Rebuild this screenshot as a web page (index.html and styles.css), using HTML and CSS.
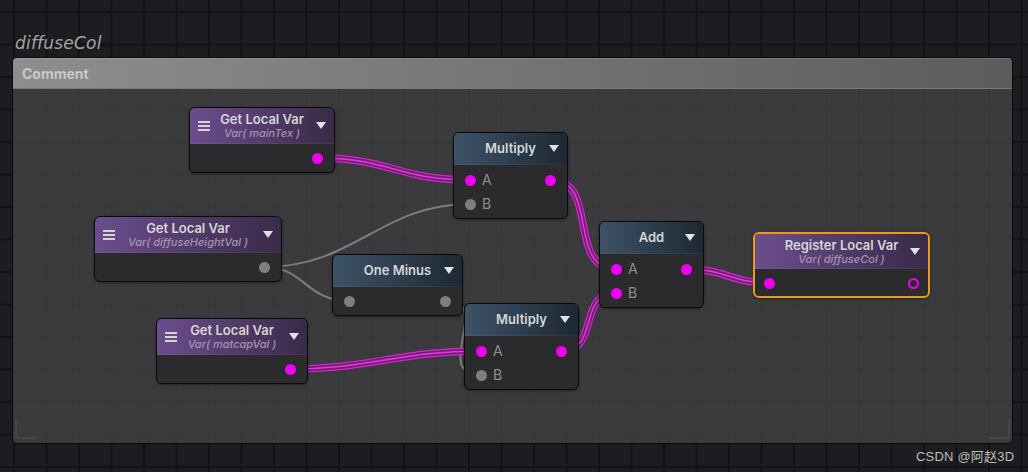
FILE: index.html
```html
<!DOCTYPE html>
<html>
<head>
<meta charset="utf-8">
<link rel="stylesheet" href="styles.css">
</head>
<body>
<div class="canvas">
  <div class="graph-title">diffuseCol</div>
  <div class="comment">
    <div class="comment-head">Comment</div>
    <div class="comment-body"></div>
    <span class="grip grip-left"></span>
    <span class="grip grip-right"></span>
  </div>

  <svg class="wires" width="1028" height="472" viewBox="0 0 1028 472">
    <g class="gray">
      <path d="M264.5 267 C355 267, 380 204, 470.5 204"/>
      <path d="M264.5 267 C305 267, 305 301, 349.5 301"/>
      <path d="M445.5 301 C495 301, 430 375, 481.5 375"/>
    </g>
    <g class="mag-outer">
      <path d="M317.5 158 C392 158, 396 180, 470.5 180"/>
      <path d="M290.5 369 C370 369, 400 351, 481.5 351"/>
      <path d="M550.5 180 C600 180, 566 269, 616.5 269"/>
      <path d="M561.5 351 C600 351, 577 293, 616.5 293"/>
      <path d="M686.5 269 C726 269, 731 283, 769.5 283"/>
    </g>
    <g class="mag-gap">
      <path d="M317.5 158 C392 158, 396 180, 470.5 180"/>
      <path d="M290.5 369 C370 369, 400 351, 481.5 351"/>
      <path d="M550.5 180 C600 180, 566 269, 616.5 269"/>
      <path d="M561.5 351 C600 351, 577 293, 616.5 293"/>
      <path d="M686.5 269 C726 269, 731 283, 769.5 283"/>
    </g>
    <g class="mag-core">
      <path d="M317.5 158 C392 158, 396 180, 470.5 180"/>
      <path d="M290.5 369 C370 369, 400 351, 481.5 351"/>
      <path d="M550.5 180 C600 180, 566 269, 616.5 269"/>
      <path d="M561.5 351 C600 351, 577 293, 616.5 293"/>
      <path d="M686.5 269 C726 269, 731 283, 769.5 283"/>
    </g>
  </svg>

  <!-- Get Local Var (mainTex) -->
  <div class="node n-main">
    <div class="node-head var tall">
      <span class="menu"><i></i><i></i><i></i></span>
      <div class="titles"><div class="title">Get Local Var</div><div class="sub">Var( mainTex )</div></div>
      <span class="caret"></span>
    </div>
    <div class="node-body single">
      <div class="row out"><span class="pin mag"></span></div>
    </div>
  </div>

  <!-- Get Local Var (diffuseHeightVal) -->
  <div class="node n-height">
    <div class="node-head var tall">
      <span class="menu"><i></i><i></i><i></i></span>
      <div class="titles"><div class="title">Get Local Var</div><div class="sub">Var( diffuseHeightVal )</div></div>
      <span class="caret"></span>
    </div>
    <div class="node-body single">
      <div class="row out"><span class="pin grey"></span></div>
    </div>
  </div>

  <!-- Get Local Var (matcapVal) -->
  <div class="node n-matcap">
    <div class="node-head var tall">
      <span class="menu"><i></i><i></i><i></i></span>
      <div class="titles"><div class="title">Get Local Var</div><div class="sub">Var( matcapVal )</div></div>
      <span class="caret"></span>
    </div>
    <div class="node-body single">
      <div class="row out"><span class="pin mag"></span></div>
    </div>
  </div>

  <!-- Multiply (top) -->
  <div class="node n-mul1">
    <div class="node-head op">
      <span></span>
      <div class="titles"><div class="title">Multiply</div></div>
      <span class="caret"></span>
    </div>
    <div class="node-body double">
      <div class="row both"><span class="port"><span class="pin mag"></span><span class="lbl">A</span></span><span class="pin mag"></span></div>
      <div class="row in"><span class="port"><span class="pin grey"></span><span class="lbl">B</span></span></div>
    </div>
  </div>

  <!-- One Minus -->
  <div class="node n-minus">
    <div class="node-head op">
      <span></span>
      <div class="titles"><div class="title">One Minus</div></div>
      <span class="caret"></span>
    </div>
    <div class="node-body single">
      <div class="row both"><span class="pin grey"></span><span class="pin grey"></span></div>
    </div>
  </div>

  <!-- Multiply (bottom) -->
  <div class="node n-mul2">
    <div class="node-head op">
      <span></span>
      <div class="titles"><div class="title">Multiply</div></div>
      <span class="caret"></span>
    </div>
    <div class="node-body double">
      <div class="row both"><span class="port"><span class="pin mag"></span><span class="lbl">A</span></span><span class="pin mag"></span></div>
      <div class="row in"><span class="port"><span class="pin grey"></span><span class="lbl">B</span></span></div>
    </div>
  </div>

  <!-- Add -->
  <div class="node n-add">
    <div class="node-head op">
      <span></span>
      <div class="titles"><div class="title">Add</div></div>
      <span class="caret"></span>
    </div>
    <div class="node-body double">
      <div class="row both"><span class="port"><span class="pin mag"></span><span class="lbl">A</span></span><span class="pin mag"></span></div>
      <div class="row in"><span class="port"><span class="pin mag"></span><span class="lbl">B</span></span></div>
    </div>
  </div>

  <!-- Register Local Var -->
  <div class="node n-reg selected">
    <div class="node-head var reg">
      <span></span>
      <div class="titles"><div class="title">Register Local Var</div><div class="sub">Var( diffuseCol )</div></div>
      <span class="caret"></span>
    </div>
    <div class="node-body reg-body">
      <div class="row both"><span class="pin mag"></span><span class="pin ring"></span></div>
    </div>
  </div>

  <div class="watermark">CSDN @阿赵3D</div>
</div>
</body>
</html>
```

FILE: styles.css
```css
* { box-sizing: border-box; }

body {
  margin: 0;
  background: #1c1d20;
}

.canvas {
  position: relative;
  width: 1028px;
  height: 472px;
  overflow: hidden;
  background-color: #1c1d20;
  background-image:
    linear-gradient(to right, #121316 2px, transparent 2px),
    linear-gradient(to bottom, #121316 2px, transparent 2px);
  background-size: 32.5px 32.5px;
  background-position: 13px 11px;
  font-family: Inter, "Noto Sans", sans-serif;
}

.graph-title {
  position: absolute;
  left: 15px;
  top: 33px;
  font-family: "DejaVu Sans", sans-serif;
  font-style: italic;
  font-size: 17px;
  color: #a4a4a4;
  letter-spacing: 0.2px;
}

.comment {
  position: absolute;
  left: 12px;
  top: 57px;
  width: 1001px;
  height: 387px;
  border: 1px solid #0b0b0c;
  border-radius: 5px;
  background: rgba(68, 68, 70, 0.8);
  display: flex;
  flex-direction: column;
  overflow: hidden;
}

.comment-head {
  height: 31px;
  flex: none;
  background: linear-gradient(to right, #8e8e8e, #5c5c5c);
  border-top: 1px solid rgba(255, 255, 255, 0.12);
  border-bottom: 1px solid #7a7a7a;
  padding-left: 9px;
  font-weight: 700;
  font-size: 14px;
  line-height: 29px;
  color: #c9c9c9;
}

.comment-body { flex: 1; }

.grip {
  position: absolute;
  bottom: 4px;
  width: 22px;
  height: 20px;
  border-bottom: 2px solid rgba(255, 255, 255, 0.06);
}
.grip-left {
  left: 2px;
  border-left: 2px solid rgba(255, 255, 255, 0.06);
  border-bottom-left-radius: 4px;
}
.grip-right {
  right: 2px;
  border-right: 2px solid rgba(255, 255, 255, 0.06);
  border-bottom-right-radius: 4px;
}

.wires {
  position: absolute;
  left: 0;
  top: 0;
}
.wires path { fill: none; }
.wires .gray path { stroke: #8a8a8a; stroke-width: 2; stroke-opacity: 0.85; }
.wires .mag-outer path { stroke: #e21ce2; stroke-width: 7.5; }
.wires .mag-gap path { stroke: #66285f; stroke-width: 5; }
.wires .mag-core path { stroke: #f030f0; stroke-width: 1.5; }

/* nodes */
.node {
  position: absolute;
  border: 1px solid #0a0a0b;
  border-radius: 6px;
  background: #2b2b2e;
  overflow: hidden;
  box-shadow: 0 1px 3px rgba(0, 0, 0, 0.4);
}

.n-main   { left: 189px; top: 107px; width: 146px; }
.n-height { left: 94px;  top: 216px; width: 188px; }
.n-matcap { left: 156px; top: 318px; width: 152px; }
.n-mul1   { left: 453px; top: 132px; width: 115px; }
.n-minus  { left: 332px; top: 254px; width: 131px; }
.n-mul2   { left: 464px; top: 303px; width: 115px; }
.n-add    { left: 599px; top: 221px; width: 105px; }
.n-reg    { left: 753px; top: 232px; width: 177px; }

.node.selected {
  border: 2px solid #e59c1c;
  border-radius: 6px;
}

.node-head {
  display: grid;
  grid-template-columns: 16px 1fr 16px;
  align-items: center;
  padding: 0 8px 0 8px;
  height: 32px;
  border-bottom: 1px solid rgba(255, 255, 255, 0.05);
}
.node-head.tall { height: 36px; }
.node-head.reg { height: 35px; }

.node-head.var { background: linear-gradient(to right, #6c4d8d, #3a2a48); }
.node-head.op  { background: linear-gradient(to right, #3e5367, #1d2833); }

.titles {
  text-align: center;
  white-space: nowrap;
}
.title {
  font-size: 13px;
  font-weight: 600;
  line-height: 15px;
  color: #d6d6d6;
}
.sub {
  font-size: 11px;
  font-style: italic;
  font-weight: 500;
  line-height: 12px;
  color: #a393b4;
}

.menu {
  display: flex;
  flex-direction: column;
  gap: 2px;
  width: 12px;
}
.menu i {
  display: block;
  height: 2px;
  background: #d4d4d4;
}

.caret {
  justify-self: end;
  width: 0;
  height: 0;
  border-left: 5px solid transparent;
  border-right: 5px solid transparent;
  border-top: 7px solid #e2e2e2;
}

.node-body { padding: 2px 0; }
.node-body.double { padding: 3px 0 2px; }
.node-body.reg-body { padding: 2px 0 1px; }

.row {
  height: 24px;
  display: flex;
  align-items: center;
  padding: 0 11px;
}
.reg-body .row { padding: 0 9px; }
.row.out { justify-content: flex-end; }
.row.both { justify-content: space-between; }

.port {
  display: flex;
  align-items: center;
  gap: 6px;
}
.lbl {
  font-size: 14px;
  color: #8e8e8e;
  line-height: 1;
}

.pin {
  width: 11px;
  height: 11px;
  border-radius: 50%;
  flex: none;
}
.pin.mag { background: #f000f0; }
.pin.grey { background: #7e7e7e; }
.pin.ring { border: 2px solid #f000f0; background: transparent; }

.watermark {
  position: absolute;
  left: 916px;
  top: 446px;
  font-family: "Liberation Sans", "Noto Sans CJK SC", sans-serif;
  font-size: 13px;
  color: #bdbdbd;
  letter-spacing: 0.2px;
}
```
